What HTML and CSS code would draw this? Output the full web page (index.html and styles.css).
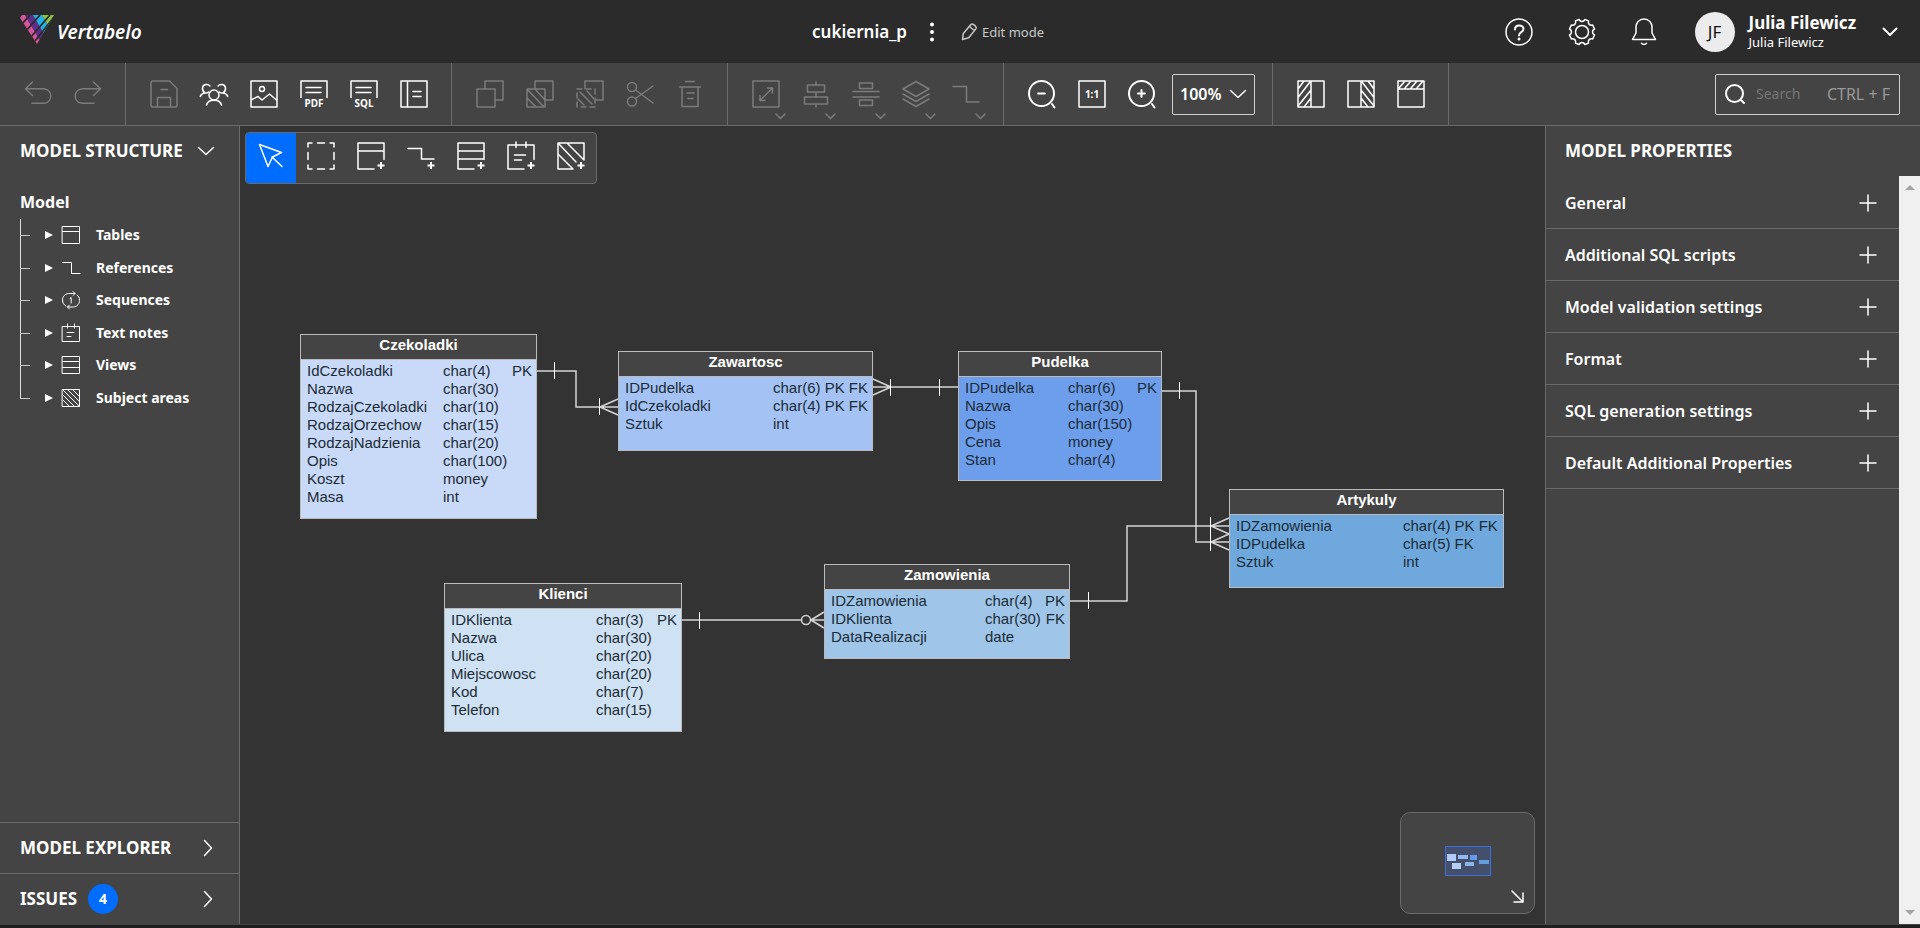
FILE: index.html
```html
<!DOCTYPE html>
<html lang="en">
<head>
<meta charset="utf-8">
<title>cukiernia_p - Vertabelo</title>
<link rel="stylesheet" href="styles.css">
</head>
<body>
<svg class="defs" aria-hidden="true">
  <defs>
    <clipPath id="logo-clip"><path d="M2 0H34L17 29 0 3Z"/></clipPath>
    <symbol id="plus" viewBox="0 0 18 18"><path d="M9 1v16M1 9h16"/></symbol>
    <symbol id="chev-r" viewBox="0 0 10 18"><path d="M1.500 1.500l7 7.500-7 7.500"/></symbol>
    <symbol id="chev-d" viewBox="0 0 18 10"><path d="M1.500 1.500l7.500 7 7.500-7"/></symbol>
  </defs>
</svg>
<div class="app">
  <header class="header">
    <a class="brand" href="#">
      <svg class="logo" width="34" height="29" viewBox="0 0 34 29">
        <g clip-path="url(#logo-clip)">
          <path d="M-2 0H5L22 29H15Z" fill="#d5559b"/>
          <path d="M5 0H13L30 29H22Z" fill="#5f2e8c"/>
          <path d="M13 0H22L39 29H30Z" fill="#22b2e6"/>
          <path d="M22 0H36V29H39Z" fill="#8fc641"/>
          <path d="M2 9L10 0M6 16L20 0M10 23L30 0M15 26L34 2" stroke="#2b2b2b" stroke-width="1.800" fill="none"/>
        </g>
      </svg>
      <span>Vertabelo</span>
    </a>
    <div class="doc">
      <h1>cukiernia_p</h1>
      <button class="plain" aria-label="Document menu"><svg width="6" height="20" viewBox="0 0 6 20"><g fill="#fff"><circle cx="3" cy="2.500" r="2"/><circle cx="3" cy="10" r="2"/><circle cx="3" cy="17.500" r="2"/></g></svg></button>
      <button class="plain mode"><svg class="ic" width="17" height="18" viewBox="0 0 17 18"><path d="M1.500 16.500l.8-6L9.500 2c1-1.200 2-1.200 3-.4l2 1.600c1 .9 1 1.800.2 2.900l-7 8.600zM8.500 3.500l4.800 4"/></svg>Edit mode</button>
    </div>
    <div class="user">
      <button class="plain" aria-label="Help"><svg class="ic" width="28" height="28" viewBox="0 0 28 28"><circle cx="14" cy="14" r="13"/><path d="M10 11.500c0-5.500 8.500-5 8.500-.5 0 3.500-4.500 2.800-4.500 6.500" stroke-width="2"/><circle cx="14" cy="21" r="1.500" class="fill"/></svg></button>
      <button class="plain" aria-label="Settings"><svg class="ic" width="28" height="28" viewBox="0 0 28 28"><circle cx="14" cy="14" r="6.500"/><path d="M11 1.500c1.600 2.700 4.400 2.700 6 0l3.500 1.400c-.7 3 1 4.800 4.200 4.200L26.500 11c-2.700 1.600-2.700 4.400 0 6l-1.800 3.900c-3.200-.6-4.900 1.200-4.200 4.200L17 26.500c-1.600-2.700-4.400-2.700-6 0l-3.500-1.400c.7-3-1-4.800-4.200-4.200L1.500 17c2.700-1.600 2.700-4.400 0-6l1.800-3.900c3.200.6 4.900-1.200 4.200-4.200z"/></svg></button>
      <button class="plain" aria-label="Notifications"><svg class="ic" width="26" height="28" viewBox="0 0 26 28"><path d="M13 1c5 0 8 4 8 8v6L24.500 21.500h-23L5 15V9c0-4 3-8 8-8zM10.500 25.200c1.400 1.600 3.600 1.600 5 0"/></svg></button>
      <button class="plain account">
        <span class="avatar">JF</span>
        <span class="names"><b>Julia Filewicz</b><span>Julia Filewicz</span></span>
        <svg class="ic bold" width="16" height="10" viewBox="0 0 16 10"><path d="M1.500 1.500L8 8l6.500-6.500"/></svg>
      </button>
    </div>
  </header>

  <div class="toolbar">
    <div class="group">
      <button disabled aria-label="Undo"><svg class="ic" width="28" height="28" viewBox="0 0 28 28"><path d="M8.500 2L1.500 8.700l7 6.800M1.500 8.700H20c9 1 9 13.600 0 14.600H8"/></svg></button>
      <button disabled aria-label="Redo"><svg class="ic" width="28" height="28" viewBox="0 0 28 28"><path d="M19.500 2l7 6.700-7 6.800M26.500 8.700H8c-9 1-9 13.600 0 14.600h12"/></svg></button>
    </div>
    <div class="group">
      <button disabled aria-label="Save"><svg class="ic" width="28" height="28" viewBox="0 0 28 28"><path d="M3 1h16.500L27 8.500V25a2 2 0 0 1-2 2H3a2 2 0 0 1-2-2V3a2 2 0 0 1 2-2zM7.500 27V17.500h13V27M11 9.500h6.500"/></svg></button>
      <button aria-label="Share"><svg class="ic" width="30" height="28" viewBox="0 0 30 28"><circle cx="15" cy="15" r="5"/><path d="M7.500 25c1.500-6.500 13.500-6.500 15 0M11 6C9 3.500 4 4 3.500 8c-.2 2.500 1 4 2.500 5-2.500.2-4 1.500-4.700 3.500M19 6c2-2.500 7-2 7.500 2 .2 2.500-1 4-2.500 5 2.500.2 4 1.500 4.700 3.500M6 13c1.500.3 2.500 0 3.500-1M24 13c-1.500.3-2.500 0-3.500-1"/></svg></button>
      <button aria-label="Export image"><svg class="ic" width="28" height="28" viewBox="0 0 28 28"><path d="M1 1h26v26H1zM1 20l7-3.500 4 3.500 7.500-6L27 20.500"/><circle cx="12" cy="9" r="2.500"/></svg></button>
      <button aria-label="Export PDF"><svg class="ic" width="28" height="28" viewBox="0 0 28 28"><path d="M1 17.500V1h26v16.500M6 7.500h15M6 12.500h15"/><text x="14" y="26.500">PDF</text></svg></button>
      <button aria-label="Export SQL"><svg class="ic" width="28" height="28" viewBox="0 0 28 28"><path d="M1 17.500V1h26v16.500M6 7.500h15M6 12.500h15"/><text x="14" y="26.500">SQL</text></svg></button>
      <button aria-label="Documentation"><svg class="ic" width="28" height="28" viewBox="0 0 28 28"><path d="M1 1h26v26H1zM7.500 1v26M13 11.500h8M13 16.500h8"/></svg></button>
    </div>
    <div class="group">
      <button disabled aria-label="Copy"><svg class="ic" width="28" height="28" viewBox="0 0 28 28"><path d="M1 9h18v18H1zM9 9V1h18v19h-8"/></svg></button>
      <button disabled aria-label="Copy with area"><svg class="ic" width="28" height="28" viewBox="0 0 28 28"><path d="M1 9h18v18H1zM9 9V1h18v19h-8M1 9l17 18M1 18l9 9M9 9l10 11"/></svg></button>
      <button disabled aria-label="Copy selection"><svg class="ic" width="28" height="28" viewBox="0 0 28 28"><path d="M9 9V1h18v19h-8"/><path d="M1 9h18v18H1z" stroke-dasharray="5 4"/><path d="M4 12l12 12M2 19l6 6M11 11l7 8"/></svg></button>
      <button disabled aria-label="Cut"><svg class="ic" width="28" height="28" viewBox="0 0 28 28"><circle cx="6" cy="7" r="4.500"/><circle cx="6" cy="21.500" r="4.500"/><path d="M9.500 10L27 23M9.500 18.500L27 6"/></svg></button>
      <button disabled aria-label="Delete"><svg class="ic" width="28" height="28" viewBox="0 0 28 28"><path d="M9.500 1.500h9M3.500 7h21M6 7v19.500h16V7M11 13h7M12 18.500h5"/></svg></button>
    </div>
    <div class="group">
      <button disabled aria-label="Resize"><svg class="ic" width="28" height="28" viewBox="0 0 28 28"><path d="M1 1h26v26H1zM8 20.500L20.500 8M15.500 8h5v5M8 15.500v5h5M24 34l4.500 4.500L33 34"/></svg></button>
      <button disabled aria-label="Align"><svg class="ic" width="28" height="28" viewBox="0 0 28 28"><path d="M5.500 5h17v7h-17zM2.500 17h23v7h-23zM14 2v3M14 12v5M14 24v3M24 34l4.500 4.500L33 34"/></svg></button>
      <button disabled aria-label="Distribute"><svg class="ic" width="28" height="28" viewBox="0 0 28 28"><path d="M7.500 3h13v5.500h-13zM7.500 20h13v5.500h-13zM1 11.500h26M1 17h26M24 34l4.500 4.500L33 34"/></svg></button>
      <button disabled aria-label="Layers"><svg class="ic" width="28" height="28" viewBox="0 0 28 28"><path d="M14 1.500L27 9l-13 7.500L1 9zM1 14l13 7.500L27 14M1 19l13 7.500L27 19M24 34l4.500 4.500L33 34"/></svg></button>
      <button disabled aria-label="Line style"><svg class="ic" width="28" height="28" viewBox="0 0 28 28"><path d="M1 6.500h13.500v15.500H27M24 34l4.500 4.500L33 34"/></svg></button>
    </div>
    <div class="group">
      <button aria-label="Zoom out"><svg class="ic bold" width="28" height="28" viewBox="0 0 28 28"><circle cx="13.500" cy="13.500" r="12.500"/><path d="M10 13.500h7M24 24l2.500 3.500"/></svg></button>
      <button aria-label="Actual size"><svg class="ic" width="28" height="28" viewBox="0 0 28 28"><path d="M1 1h26v26H1z"/><text x="14" y="17.500">1:1</text></svg></button>
      <button aria-label="Zoom in"><svg class="ic bold" width="28" height="28" viewBox="0 0 28 28"><circle cx="13.500" cy="13.500" r="12.500"/><path d="M10 13.500h7M13.500 10v7M24 24l2.500 3.500"/></svg></button>
      <div class="zoom">
        <select aria-label="Zoom level"><option>100%</option></select>
        <svg class="ic" width="18" height="10"><use href="#chev-d"/></svg>
      </div>
    </div>
    <div class="group">
      <button aria-label="Left panel"><svg class="ic" width="28" height="28" viewBox="0 0 28 28"><path d="M1 1h26v26H1zM14 1v26M1 9l6-8M1 17.500L13 2M1 26L14 10M7 27l7-9"/></svg></button>
      <button aria-label="Right panel"><svg class="ic" width="28" height="28" viewBox="0 0 28 28"><path d="M1 1h26v26H1zM14 1v26M27 9l-6-8M27 17.500L15 2M27 26L14 10M21 27l-7-9"/></svg></button>
      <button aria-label="Top panel"><svg class="ic" width="28" height="28" viewBox="0 0 28 28"><path d="M1 1h26v26H1zM1 9h26M2 8l6-7M8 8l6-7M14 8l6-7M20 8l6-7"/></svg></button>
    </div>
    <label class="search">
      <svg class="ic bold" width="20" height="20" viewBox="0 0 20 20"><circle cx="9.500" cy="9.500" r="8.500"/><path d="M16.500 16.500l2.500 2.500"/></svg>
      <input type="text" placeholder="Search" aria-label="Search">
      <span>CTRL + F</span>
    </label>
  </div>

  <div class="body">
    <aside class="left">
      <button class="plain head">MODEL STRUCTURE<svg class="ic" width="18" height="10"><use href="#chev-d"/></svg></button>
      <nav class="tree">
        <h2>Model</h2>
        <ul>
          <li><i></i><svg class="ic thin" width="18" height="18" viewBox="0 0 18 18"><path d="M.5.5h17v17H.5zM.5 5.500h17"/></svg><a href="#">Tables</a></li>
          <li><i></i><svg class="ic thin" width="18" height="18" viewBox="0 0 18 18"><path d="M.5 3.500h9v11h8.500"/></svg><a href="#">References</a></li>
          <li><i></i><svg class="ic thin" width="18" height="18" viewBox="0 0 18 18"><path d="M11 .5l2 2-2 2M13 2.500H6.500C2.500 3 .5 6 .5 9s1.500 5 3.500 6M7.500 14l-2 2 2 2M5.500 16H11.500c4-.5 6-3.500 6-6.500s-1-4.500-2.500-5.500M8 7.500l1.200-1V12"/></svg><a href="#">Sequences</a></li>
          <li><i></i><svg class="ic thin" width="18" height="18" viewBox="0 0 18 18"><path d="M.5 2.500h17v15H.5zM5.500 0v4M12.500 0v4M5 8.500h7M5 12.500h4"/></svg><a href="#">Text notes</a></li>
          <li><i></i><svg class="ic thin" width="18" height="18" viewBox="0 0 18 18"><path d="M.5.5h17v17H.5zM.5 5.500h17M.5 11.500h17"/></svg><a href="#">Views</a></li>
          <li><i></i><svg class="ic thin" width="18" height="18" viewBox="0 0 18 18"><path d="M.5.5h17v17H.5zM1 1l16 16M1 6l11 11M1 11l6 6M6 1l11 11M11 1l6 6"/></svg><a href="#">Subject areas</a></li>
        </ul>
      </nav>
      <button class="plain foot">MODEL EXPLORER<svg class="ic" width="10" height="18"><use href="#chev-r"/></svg></button>
      <button class="plain foot">ISSUES<span class="badge">4</span><svg class="ic" width="10" height="18"><use href="#chev-r"/></svg></button>
    </aside>

    <main class="canvas">
      <svg class="lines" width="100%" height="100%">
        <g transform="translate(-240 -126)">
          <path d="M536 371h40v36h42M600 407l18-8M600 407l18 8M873 387h85M891 387l-18-8M891 387l-18 8M1162 391h34v151h34M1211 542l18-8M1211 542l18 8M1070 601h57v-75H1229M1211 526l18-8M1211 526l18 8M682 620h119M811 620h13M811 620l13-8M811 620l13 8"/>
          <circle cx="806" cy="620" r="4.500"/>
          <path class="tick" d="M554.500 362v17M599.500 398v17M890.500 379v17M939.500 379v17M1179.500 382v17M1210.500 534v17M1088.500 592v17M1210.500 517v17M699.500 612v17"/>
        </g>
      </svg>

      <div class="tools">
        <button class="on" aria-label="Select"><svg class="ic" width="28" height="28" viewBox="0 0 28 28"><path d="M2.500 2.500l8.500 22 4.500-9.500 9-4.500zM15 15l10 9.500"/></svg></button>
        <button aria-label="Marquee"><svg class="ic" width="28" height="28" viewBox="0 0 28 28"><path d="M1 5V1h4M10.500 1h7M23 1h4v4M27 10.500v7M27 23v4h-4M17.500 27h-7M5 27H1v-4M1 17.500v-7"/></svg></button>
        <button aria-label="Add table"><svg class="ic" width="28" height="28" viewBox="0 0 28 28"><path d="M17 27H1V1h26v16.500M1 9h26"/><path class="add" d="M24 20v7M20.500 23.500h7"/></svg></button>
        <button aria-label="Add reference"><svg class="ic" width="28" height="28" viewBox="0 0 28 28"><path d="M1 6.500h13.500V17H27"/><path class="add" d="M24 20v7M20.500 23.500h7"/></svg></button>
        <button aria-label="Add view"><svg class="ic" width="28" height="28" viewBox="0 0 28 28"><path d="M17 27H1V1h26v16.500M1 9h26M1 17h26"/><path class="add" d="M24 20v7M20.500 23.500h7"/></svg></button>
        <button aria-label="Add text note"><svg class="ic" width="28" height="28" viewBox="0 0 28 28"><path d="M17 27H1V3h26v14.500M9 0v5.500M19 0v5.500M7.500 13h11M7.500 18h7"/><path class="add" d="M24 20v7M20.500 23.500h7"/></svg></button>
        <button aria-label="Add subject area"><svg class="ic" width="28" height="28" viewBox="0 0 28 28"><path d="M16 27L1 12V1h26v17L10.500 1.500M1 12v15h15M1.500 1.500L19 20"/><path class="add" d="M24 20v7M20.500 23.500h7"/></svg></button>
      </div>

      <table class="entity czekoladki">
        <caption>Czekoladki</caption>
        <tr><td>IdCzekoladki</td><td>char(4)</td><td>PK</td></tr>
        <tr><td>Nazwa</td><td>char(30)</td><td></td></tr>
        <tr><td>RodzajCzekoladki</td><td>char(10)</td><td></td></tr>
        <tr><td>RodzajOrzechow</td><td>char(15)</td><td></td></tr>
        <tr><td>RodzajNadzienia</td><td>char(20)</td><td></td></tr>
        <tr><td>Opis</td><td>char(100)</td><td></td></tr>
        <tr><td>Koszt</td><td>money</td><td></td></tr>
        <tr><td>Masa</td><td>int</td><td></td></tr>
      </table>
      <table class="entity zawartosc">
        <caption>Zawartosc</caption>
        <tr><td>IDPudelka</td><td>char(6)</td><td>PK FK</td></tr>
        <tr><td>IdCzekoladki</td><td>char(4)</td><td>PK FK</td></tr>
        <tr><td>Sztuk</td><td>int</td><td></td></tr>
      </table>
      <table class="entity pudelka">
        <caption>Pudelka</caption>
        <tr><td>IDPudelka</td><td>char(6)</td><td>PK</td></tr>
        <tr><td>Nazwa</td><td>char(30)</td><td></td></tr>
        <tr><td>Opis</td><td>char(150)</td><td></td></tr>
        <tr><td>Cena</td><td>money</td><td></td></tr>
        <tr><td>Stan</td><td>char(4)</td><td></td></tr>
      </table>
      <table class="entity klienci">
        <caption>Klienci</caption>
        <tr><td>IDKlienta</td><td>char(3)</td><td>PK</td></tr>
        <tr><td>Nazwa</td><td>char(30)</td><td></td></tr>
        <tr><td>Ulica</td><td>char(20)</td><td></td></tr>
        <tr><td>Miejscowosc</td><td>char(20)</td><td></td></tr>
        <tr><td>Kod</td><td>char(7)</td><td></td></tr>
        <tr><td>Telefon</td><td>char(15)</td><td></td></tr>
      </table>
      <table class="entity zamowienia">
        <caption>Zamowienia</caption>
        <tr><td>IDZamowienia</td><td>char(4)</td><td>PK</td></tr>
        <tr><td>IDKlienta</td><td>char(30)</td><td>FK</td></tr>
        <tr><td>DataRealizacji</td><td>date</td><td></td></tr>
      </table>
      <table class="entity artykuly">
        <caption>Artykuly</caption>
        <tr><td>IDZamowienia</td><td>char(4)</td><td>PK FK</td></tr>
        <tr><td>IDPudelka</td><td>char(5)</td><td>FK</td></tr>
        <tr><td>Sztuk</td><td>int</td><td></td></tr>
      </table>

      <div class="minimap">
        <svg width="46" height="30" viewBox="0 0 46 30">
          <rect x=".5" y=".5" width="45" height="29" fill="#434f6b" stroke="#3b6fe0"/>
          <rect x="2" y="8" width="9" height="7" fill="#b3cbf8"/>
          <rect x="13" y="9" width="10" height="4" fill="#94b6f3"/>
          <rect x="25" y="9" width="7" height="5" fill="#6398ee"/>
          <rect x="7" y="17" width="9" height="6" fill="#b3d0f3"/>
          <rect x="20" y="16" width="9" height="4" fill="#8bb4e8"/>
          <rect x="34" y="14" width="10" height="4" fill="#639fe0"/>
        </svg>
        <button class="plain" aria-label="Collapse minimap"><svg class="ic" width="13" height="13" viewBox="0 0 13 13"><path d="M1 1l11 11M3 12h9V3"/></svg></button>
      </div>
    </main>

    <aside class="right">
      <h2 class="head">MODEL PROPERTIES</h2>
      <div class="scroller">
        <div class="props">
          <button class="plain">General<svg class="ic" width="18" height="18"><use href="#plus"/></svg></button>
          <button class="plain">Additional SQL scripts<svg class="ic" width="18" height="18"><use href="#plus"/></svg></button>
          <button class="plain">Model validation settings<svg class="ic" width="18" height="18"><use href="#plus"/></svg></button>
          <button class="plain">Format<svg class="ic" width="18" height="18"><use href="#plus"/></svg></button>
          <button class="plain">SQL generation settings<svg class="ic" width="18" height="18"><use href="#plus"/></svg></button>
          <button class="plain">Default Additional Properties<svg class="ic" width="18" height="18"><use href="#plus"/></svg></button>
        </div>
        <div class="scrollbar"><i class="up"></i><i class="down"></i></div>
      </div>
    </aside>
  </div>
</div>
</body>
</html>
```
FILE: styles.css
```css
* { box-sizing: border-box; }
body { margin: 0; background: #1f1e1f; color: #fff; font: 16px/20px "Noto Sans", sans-serif; }
h1, h2, ul { margin: 0; padding: 0; font-size: inherit; }
a { color: inherit; text-decoration: none; }
button { font: inherit; color: inherit; border: 0; padding: 0; background: none; display: flex; align-items: center; justify-content: center; }
.defs { position: absolute; width: 0; height: 0; }
.ic { fill: none; stroke: currentColor; stroke-width: 1.5; stroke-linecap: round; stroke-linejoin: round; overflow: visible; flex: none; }
.ic.bold { stroke-width: 2; }
.ic.thin { stroke-width: 1; }
.ic .fill { fill: currentColor; stroke: none; }
.ic .add { stroke-width: 2; stroke-linecap: butt; }
.ic text { fill: currentColor; stroke: none; font-size: 10px; font-weight: 700; text-anchor: middle; }

.app { display: flex; flex-direction: column; height: 100vh; padding-bottom: 3px; }

.header { display: flex; align-items: center; height: 63px; flex: none; background: #2b2b2b; padding: 0 22px 0 20px; }
.brand { flex: 1; display: flex; align-items: center; gap: 3px; font-size: 19px; font-style: italic; font-weight: 600; }
.logo { margin-bottom: 4px; }
.doc { display: flex; align-items: center; gap: 22px; margin-right: 62px; }
.doc h1 { font-size: 17px; font-weight: 600; }
.mode { gap: 4px; margin-left: 4px; font-size: 13px; color: #c8c8c8; }
.user { flex: 1; display: flex; align-items: center; justify-content: flex-end; gap: 35px; }
.account { gap: 14px; margin-left: 3px; text-align: left; }
.avatar { width: 40px; height: 40px; border-radius: 50%; background: #ececec; color: #111; font-size: 17px; line-height: 40px; text-align: center; }
.names { display: flex; flex-direction: column; margin-right: 12px; }
.names b { font-size: 17px; line-height: 20px; }
.names span { font-size: 13px; line-height: 18px; }

.toolbar { display: flex; height: 63px; flex: none; background: #444; border-bottom: 1px solid #6a6a6a; }
.group { display: flex; align-items: center; padding: 0 12px 0 13px; border-right: 1px solid #6a6a6a; }
.toolbar button { width: 50px; height: 50px; }
.toolbar button:disabled { color: #7b7b7b; }
.zoom { display: flex; align-items: center; margin: 0 5px 0 5px; width: 83px; height: 41px; border: 1px solid #d0d0d0; border-radius: 2px; padding: 0 7px; }
.zoom select { appearance: none; flex: 1; min-width: 0; border: 0; padding: 0; background: none; color: #fff; font: 600 16px/24px "Noto Sans", sans-serif; }
.search { display: flex; align-items: center; gap: 11px; margin: 0 20px 0 auto; width: 185px; height: 41px; align-self: center; border: 1px solid #d0d0d0; border-radius: 2px; padding: 0 9px; color: #fff; }
.search input { flex: 1; min-width: 0; border: 0; padding: 0; background: none; color: #fff; font: 14px/20px "Noto Sans", sans-serif; }
.search input::placeholder { color: #777; opacity: 1; }
.search span { color: #999; white-space: nowrap; }

.body { flex: 1; min-height: 0; display: flex; border-bottom: 1px solid #444; }
.left { width: 240px; display: flex; flex-direction: column; background: #444; border-right: 1px solid #6a6a6a; }
.head { display: flex; align-items: center; height: 50px; flex: none; font-size: 17px; font-weight: 700; justify-content: flex-start; gap: 14px; padding-left: 20px; }
.tree { flex: 1; padding: 16px 0 0 20px; }
.tree h2 { font-size: 16px; font-weight: 700; line-height: 20px; }
.tree ul { list-style: none; display: grid; grid-auto-rows: 1fr; height: 195px; margin-top: 7px; }
.tree li { position: relative; display: flex; align-items: center; padding-left: 25px; font-size: 14px; font-weight: 700; }
.tree li::before { content: ""; position: absolute; left: 0; top: 0; bottom: 0; border-left: 1px solid #e0e0e0; }
.tree li:last-child::before { bottom: 50%; }
.tree li::after { content: ""; position: absolute; left: 0; top: 50%; width: 10px; height: 1px; background: #ccc; }
.tree i { border: 4px solid transparent; border-left: 8px solid #fff; border-right: 0; margin-right: 9px; }
.tree a { margin-left: 16px; }
.foot { height: 51px; flex: none; justify-content: flex-start; padding: 0 26px 0 20px; border-top: 1px solid #6a6a6a; font-size: 17px; font-weight: 700; }
.foot .ic { margin-left: auto; }
.badge { width: 30px; height: 30px; margin-left: 11px; border-radius: 50%; background: #006dff; font-size: 14px; line-height: 30px; }

.canvas { flex: 1; min-width: 0; position: relative; overflow: hidden; background: #333; }
.lines { position: absolute; inset: 0; fill: none; stroke: #d5d5d5; stroke-width: 1.5; }
.lines .tick { stroke: #fff; stroke-width: 1; }
.tools { position: absolute; left: 5px; top: 6px; display: flex; background: #444; border: 1px solid #6a6a6a; border-radius: 4px; overflow: hidden; }
.tools button { width: 50px; height: 50px; }
.tools .ic { margin-bottom: 4px; }
.tools .on { background: #006dff; }

.entity { position: absolute; display: block; border: 1px solid #bbb; border-spacing: 0; color: #1b2b36; font: 15px/18px "Liberation Sans", Arial, sans-serif; }
.entity caption { display: block; height: 25px; margin-bottom: 2px; border-bottom: 1px solid #bbb; background: #444; color: #fff; font-weight: 700; line-height: 20px; }
.entity tbody { display: block; padding-left: 6px; }
.entity tr { display: flex; }
.entity td { padding: 0; height: 18px; white-space: nowrap; }
.entity td:last-child { margin-left: auto; padding-right: 4px; }
.czekoladki { left: 60px; top: 208px; width: 237px; height: 185px; background: #c9daf8; }
.czekoladki td:first-child { width: 136px; }
.zawartosc { left: 378px; top: 225px; width: 255px; height: 100px; background: #a4c2f4; }
.zawartosc td:first-child { width: 148px; }
.pudelka { left: 718px; top: 225px; width: 204px; height: 130px; background: #6d9eeb; }
.pudelka td:first-child { width: 103px; }
.klienci { left: 204px; top: 457px; width: 238px; height: 149px; background: #cfe2f3; }
.klienci td:first-child { width: 145px; }
.zamowienia { left: 584px; top: 438px; width: 246px; height: 95px; background: #9fc5e8; }
.zamowienia td:first-child { width: 154px; }
.artykuly { left: 989px; top: 363px; width: 275px; height: 99px; background: #6fa8dc; }
.artykuly td:first-child { width: 167px; }
.artykuly td:last-child { margin-left: 4px; padding-right: 0; }

.minimap { position: absolute; right: 10px; bottom: 10px; width: 135px; height: 102px; display: grid; place-items: center; padding-bottom: 4px; background: #444; border: 1px solid #6a6a6a; border-radius: 10px; }
.minimap button { position: absolute; right: 10px; bottom: 10px; }

.right { width: 375px; display: flex; flex-direction: column; background: #444; border-left: 1px solid #6a6a6a; }
.right .head { padding-left: 19px; }
.scroller { flex: 1; display: flex; min-height: 0; }
.props { flex: 1; padding-top: 1px; }
.props button { width: 100%; height: 52px; justify-content: space-between; padding: 0 22px 0 19px; border-bottom: 1px solid #6a6a6a; font-weight: 600; }
.scrollbar { width: 21px; display: flex; flex-direction: column; justify-content: space-between; align-items: center; padding: 9px 0; background: #f0f0f0; }
.scrollbar i { border: 5px solid transparent; }
.scrollbar .up { border-top: 0; border-bottom-color: #a3a3a3; }
.scrollbar .down { border-bottom: 0; border-top-color: #a3a3a3; }
```
